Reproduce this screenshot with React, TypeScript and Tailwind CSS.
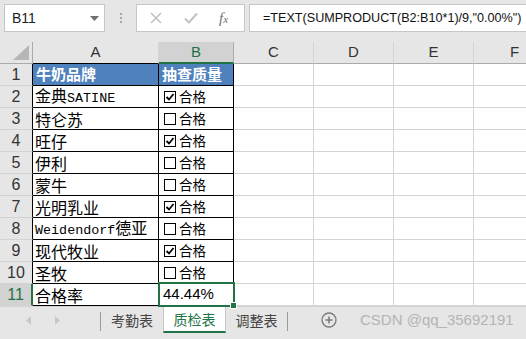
import React from 'react';

type Row = { name: string; ok: boolean };

const rows: Row[] = [
  { name: '金典SATINE', ok: true },
  { name: '特仑苏', ok: false },
  { name: '旺仔', ok: true },
  { name: '伊利', ok: false },
  { name: '蒙牛', ok: false },
  { name: '光明乳业', ok: true },
  { name: 'Weidendorf德亚', ok: false },
  { name: '现代牧业', ok: true },
  { name: '圣牧', ok: false },
];

// SimSun-like text: latin runs are half-width monospace
const SimText: React.FC<{ text: string }> = ({ text }) => (
  <span>
    {text.split(/([A-Za-z]+)/).filter(Boolean).map((part, i) =>
      /[A-Za-z]/.test(part) ? (
        <span key={i} className="font-['Liberation_Mono',monospace] text-[13.4px]">{part}</span>
      ) : (
        <span key={i}>{part}</span>
      )
    )}
  </span>
);

const CheckBox: React.FC<{ checked: boolean }> = ({ checked }) => (
  <span className="w-[12px] h-[12px] border border-black bg-white flex items-center justify-center">
    {checked && (
      <svg width="10" height="10" viewBox="0 0 10 10">
        <path d="M1.5 5 L4 7.5 L8.5 2" fill="none" stroke="#000" strokeWidth="1.8" />
      </svg>
    )}
  </span>
);

const EmptyCells: React.FC = () => (
  <>
    <div className="w-[80px] h-full border-r border-b border-[#d4d4d4]" />
    <div className="w-[80px] h-full border-r border-b border-[#d4d4d4]" />
    <div className="w-[80px] h-full border-r border-b border-[#d4d4d4]" />
    <div className="flex-1 h-full border-b border-[#d4d4d4]" />
  </>
);

const RowHead: React.FC<{ n: number; selected?: boolean }> = ({ n, selected }) => (
  <div
    className={
      'w-[33px] h-full flex items-center justify-center text-[16px] border-b border-[#d4d4d4] ' +
      (selected ? 'bg-[#d2d2d2] text-[#217346] border-r-2 border-r-[#217346]' : 'bg-[#e6e6e6] text-[#333] border-r border-r-black')
    }
  >
    {n}
  </div>
);

export default function App() {
  return (
    <div className="w-[526px] h-[339px] overflow-hidden bg-white font-['Liberation_Sans','Noto_Sans_CJK_SC',sans-serif] text-black">
      {/* formula bar */}
      <div className="h-[42px] bg-[#e6e6e6] flex pt-[4px] pl-[4px]">
        <div className="w-[101px] h-[28px] bg-white border border-[#c6c6c6] flex items-center pl-[7px] pr-[5px]">
          <span className="text-[14px] text-[#222] flex-1">B11</span>
          <svg width="9" height="5" viewBox="0 0 9 5">
            <path d="M0 0 H9 L4.5 5 Z" fill="#6f6f6f" />
          </svg>
        </div>
        <div className="w-[31px] h-[28px] flex flex-col items-center justify-center gap-[2px]">
          <span className="w-[2px] h-[2px] bg-[#a6a6a6]" />
          <span className="w-[2px] h-[2px] bg-[#a6a6a6]" />
          <span className="w-[2px] h-[2px] bg-[#a6a6a6]" />
        </div>
        <div className="w-[109px] h-[28px] bg-white border border-[#c6c6c6] flex items-center">
          <svg className="ml-[13px]" width="12" height="12" viewBox="0 0 12 12">
            <path d="M1 1 L11 11 M11 1 L1 11" stroke="#c2c2c2" strokeWidth="1.6" />
          </svg>
          <svg className="ml-[22px]" width="14" height="12" viewBox="0 0 14 12">
            <path d="M1 6.5 L5 10.5 L13 1.5" fill="none" stroke="#c2c2c2" strokeWidth="2" />
          </svg>
          <span className="ml-[21px] font-['Liberation_Serif',serif] italic text-[15px] text-[#6f6f6f] leading-none">
            f<span className="text-[11px]">x</span>
          </span>
        </div>
        <div className="flex-1 h-[28px] ml-[4px] bg-white border-y border-l border-[#c6c6c6] flex items-center pl-[13px] text-[12.6px] text-[#111] whitespace-nowrap overflow-hidden">
          =TEXT(SUMPRODUCT(B2:B10*1)/9,"0.00%")
        </div>
      </div>

      {/* column headers */}
      <div className="h-[22px] flex bg-[#e6e6e6] text-[15px] text-[#333]">
        <div className="w-[33px] h-full border-r border-b border-[#ababab] flex items-end justify-end pr-[3px] pb-[3px]">
          <svg width="16" height="15" viewBox="0 0 16 15">
            <path d="M16 0 V15 H0 Z" fill="#b6b6b6" />
          </svg>
        </div>
        <div className="w-[126px] h-full border-r border-[#d4d4d4] border-b border-b-black flex items-center justify-center">A</div>
        <div className="w-[75px] h-full bg-[#d2d2d2] border-r border-[#ababab] border-b-2 border-b-[#217346] flex items-center justify-center text-[#217346]">B</div>
        <div className="w-[80px] h-full border-r border-b border-[#d4d4d4] border-b-[#ababab] flex items-center justify-center">C</div>
        <div className="w-[80px] h-full border-r border-b border-[#d4d4d4] border-b-[#ababab] flex items-center justify-center">D</div>
        <div className="w-[80px] h-full border-r border-b border-[#d4d4d4] border-b-[#ababab] flex items-center justify-center">E</div>
        <div className="flex-1 h-full border-b border-[#ababab] flex items-center pl-[36px]">F</div>
      </div>

      {/* row 1: table header */}
      <div className="h-[22px] flex">
        <RowHead n={1} />
        <div className="w-[126px] h-full bg-[#4f81bd] border-r border-b border-black flex items-center pl-[3px] text-white font-bold text-[15px] font-['Noto_Sans_CJK_SC',sans-serif]">
          牛奶品牌
        </div>
        <div className="w-[75px] h-full bg-[#4f81bd] border-r border-b border-black flex items-center pl-[3px] text-white font-bold text-[15px] font-['Noto_Sans_CJK_SC',sans-serif]">
          抽查质量
        </div>
        <EmptyCells />
      </div>

      {rows.map((r, i) => (
        <div key={i} className="h-[22px] flex">
          <RowHead n={i + 2} />
          <div className="w-[126px] h-full border-r border-b border-black flex items-center pl-[2px] text-[16px] whitespace-nowrap font-['Noto_Sans_CJK_SC',sans-serif]">
            <SimText text={r.name} />
          </div>
          <div className="w-[75px] h-full border-r border-b border-black flex items-center pl-[5px] gap-[3px] text-[13.5px] font-['Noto_Sans_CJK_SC',sans-serif]">
            <CheckBox checked={r.ok} />
            <span>合格</span>
          </div>
          <EmptyCells />
        </div>
      ))}

      {/* row 11 */}
      <div className="h-[22px] flex">
        <RowHead n={11} selected />
        <div className="w-[126px] h-full border-r border-b border-black flex items-center pl-[2px] text-[16px] font-['Noto_Sans_CJK_SC',sans-serif]">
          合格率
        </div>
        <div className="relative w-[75px] h-full border-r border-b border-black flex items-center pl-[4px] text-[15px]">
          44.44%
          <div className="absolute -left-[1px] -top-[2px] w-[77px] h-[25px] border-2 border-[#217346]" />
          <div className="absolute -right-[4px] -bottom-[4px] w-[7px] h-[7px] bg-[#217346] border border-white" />
        </div>
        <EmptyCells />
      </div>

      {/* sheet tabs */}
      <div className="h-[33px] bg-[#e6e6e6] border-t border-[#d4d4d4] flex items-start text-[14px] font-['Noto_Sans_CJK_SC',sans-serif]">
        <div className="w-[100px] h-[26px] flex items-center">
          <svg className="ml-[26px]" width="5" height="9" viewBox="0 0 5 9">
            <path d="M5 0 V9 L0 4.5 Z" fill="#c8c8c8" />
          </svg>
          <svg className="ml-[24px]" width="5" height="9" viewBox="0 0 5 9">
            <path d="M0 0 V9 L5 4.5 Z" fill="#c8c8c8" />
          </svg>
        </div>
        <div className="w-px h-[19px] mt-[5px] bg-[#9c9c9c]" />
        <div className="w-[62px] h-[26px] flex items-center justify-center text-[#444]">考勤表</div>
        <div className="w-[63px] h-[26px] bg-white border-x border-[#c6c6c6] border-b-2 border-b-[#217346] flex items-center justify-center text-[#217346]">
          质检表
        </div>
        <div className="w-[61px] h-[26px] flex items-center justify-center text-[#444]">调整表</div>
        <div className="w-px h-[19px] mt-[5px] bg-[#9c9c9c]" />
        <div className="h-[26px] flex items-center ml-[33px]">
          <svg width="16" height="16" viewBox="0 0 16 16">
            <circle cx="8" cy="8" r="7" fill="none" stroke="#7a7a7a" strokeWidth="1.3" />
            <path d="M8 4.5 V11.5 M4.5 8 H11.5" stroke="#7a7a7a" strokeWidth="1.5" />
          </svg>
        </div>
        <div className="h-[26px] flex items-center ml-[23px] text-[15px] text-[#b4b4b4] font-['Liberation_Sans',sans-serif] whitespace-nowrap">
          CSDN @qq_35692191
        </div>
      </div>
    </div>
  );
}
